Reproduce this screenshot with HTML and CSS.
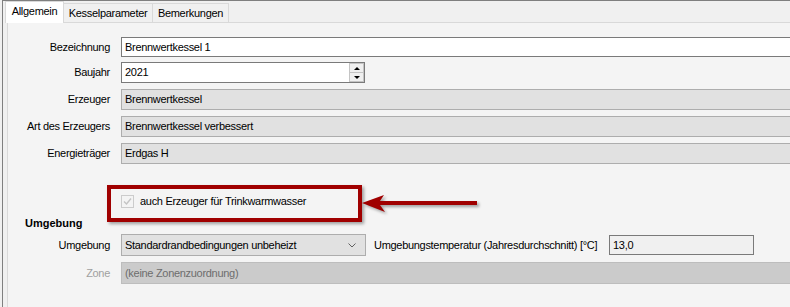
FILE: index.html
```html
<!DOCTYPE html>
<html lang="de">
  <head>
    <meta charset="UTF-8" />
    <meta name="viewport" content="width=device-width, initial-scale=1.0" />
    <title>Erzeuger</title>
    <link rel="stylesheet" href="styles.css">
  </head>
  <body>
    <div class="window">
      <div class="tabs">
        <div class="tab tab-active">Allgemein</div>
        <div class="tab tab-kessel">Kesselparameter</div>
        <div class="tab tab-notes">Bemerkungen</div>
      </div>
      <div class="panel">
        <div class="form">
          <label class="label">Bezeichnung</label>
          <div class="field">Brennwertkessel 1</div>

          <label class="label label-tall">Baujahr</label>
          <div class="field field-spin">
            <span>2021</span>
            <span class="spinner">
              <span class="spin-btn"><i class="tri-up"></i></span>
              <span class="spin-btn"><i class="tri-down"></i></span>
            </span>
          </div>

          <label class="label label-tall">Erzeuger</label>
          <div class="field field-readonly">Brennwertkessel</div>

          <label class="label label-tall">Art des Erzeugers</label>
          <div class="field field-readonly">Brennwertkessel verbessert</div>

          <label class="label label-tall">Energieträger</label>
          <div class="field field-readonly">Erdgas H</div>
        </div>

        <div class="check-row">
          <span class="checkbox">
            <svg width="11" height="11" viewBox="0 0 11 11">
              <path d="M2 5.5 L4.5 8 L9 2.5" fill="none" stroke="#c4c4c4" stroke-width="1.4" />
            </svg>
          </span>
          <span>auch Erzeuger für Trinkwarmwasser</span>
        </div>

        <div class="section-title">Umgebung</div>

        <div class="form form-env">
          <label class="label label-env">Umgebung</label>
          <div class="env-row">
            <div class="combo">
              <span>Standardrandbedingungen unbeheizt</span>
              <svg width="8" height="5" viewBox="0 0 8 5">
                <path d="M0.5 0.5 L4 4 L7.5 0.5" fill="none" stroke="#606060" stroke-width="1" />
              </svg>
            </div>
            <span class="temp-label">Umgebungstemperatur (Jahresdurchschnitt) [°C]</span>
            <div class="field field-temp">13,0</div>
          </div>

          <label class="label label-env label-disabled">Zone</label>
          <div class="field field-zone">(keine Zonenzuordnung)</div>
        </div>
      </div>
    </div>

    <div class="callout-box"></div>
    <svg class="callout-arrow" width="120" height="24" viewBox="0 0 120 24">
      <path d="M2 11 L24 3 L20 9 L117 9 L117 13 L20 13 L25 20 Z" fill="#a00000" />
    </svg>
  </body>
</html>
```

FILE: styles.css
```css
:root {
  --strip-bg: #f0f0f0;
  --panel-bg: #f4f4f4;
  --tab-border: #d9d9d9;
  --field-border: #7a7a7a;
  --readonly-bg: #e1e1e1;
  --readonly-border: #adadad;
  --callout: #a00000;
}

body {
  margin: 0;
  width: 790px;
  height: 307px;
  overflow: hidden;
  background-color: var(--strip-bg);
  font-family: "Liberation Sans", Arial, sans-serif;
  font-size: 11px;
  letter-spacing: -0.3px;
  color: #000;
}

.window {
  margin-left: 2px;
  height: 307px;
  box-sizing: border-box;
  border-left: 1px solid #7f7f7f;
  border-top: 1px solid #7f7f7f;
  display: flex;
  flex-direction: column;
}

/* tab strip */
.tabs {
  display: flex;
  align-items: flex-end;
  height: 21px;
  padding-left: 2px;
}

.tab {
  box-sizing: border-box;
  height: 19px;
  padding-top: 3px;
  line-height: 13px;
  text-align: center;
  border-top: 1px solid var(--tab-border);
  border-right: 1px solid var(--tab-border);
  background-color: var(--strip-bg);
}

.tab-active {
  position: relative;
  z-index: 1;
  width: 59px;
  height: 22px;
  margin-bottom: -1px;
  border-left: 1px solid var(--tab-border);
  background-color: #fff;
}

.tab-kessel {
  width: 89px;
}

.tab-notes {
  width: 76px;
}

/* tab page */
.panel {
  flex: 1;
  margin-left: 4px;
  border-left: 1px solid var(--tab-border);
  border-top: 1px solid var(--tab-border);
  background-color: var(--panel-bg);
}

.form {
  display: grid;
  grid-template-columns: 102px 700px;
  grid-template-rows: 25px 27px 27px 27px 21px;
  column-gap: 11px;
  align-items: start;
  margin-top: 14px;
}

.label {
  text-align: right;
  line-height: 20px;
  white-space: nowrap;
}

.label-tall {
  line-height: 21px;
}

.label-disabled {
  color: #a0a0a0;
}

.field {
  box-sizing: border-box;
  height: 20px;
  padding: 0 3px;
  line-height: 18px;
  border: 1px solid var(--field-border);
  background-color: #fff;
  white-space: nowrap;
}

.field-spin {
  width: 244px;
  height: 21px;
  line-height: 19px;
  padding-right: 0;
  display: flex;
  justify-content: space-between;
}

.spinner {
  display: flex;
  flex-direction: column;
  width: 15px;
  height: 19px;
  box-sizing: border-box;
  border: 1px solid #c4c4c4;
}

.spin-btn {
  flex: 1;
  display: flex;
  align-items: center;
  justify-content: center;
  background-color: #f0f0f0;
}

.spin-btn + .spin-btn {
  border-top: 1px solid #c4c4c4;
}

.tri-up,
.tri-down {
  width: 0;
  height: 0;
  border-left: 3px solid transparent;
  border-right: 3px solid transparent;
}

.tri-up {
  border-bottom: 3px solid #000;
}

.tri-down {
  border-top: 3px solid #000;
}

.field-readonly {
  height: 21px;
  line-height: 19px;
  border-color: var(--readonly-border);
  background-color: var(--readonly-bg);
}

/* checkbox */
.check-row {
  display: flex;
  align-items: center;
  gap: 6px;
  height: 13px;
  line-height: 13px;
  margin: 31px 0 0 113px;
}

.checkbox {
  box-sizing: border-box;
  width: 13px;
  height: 13px;
  border: 1px solid #cccccc;
  background-color: var(--panel-bg);
  display: flex;
  align-items: center;
  justify-content: center;
}

.section-title {
  margin: 9px 0 0 17px;
  font-weight: bold;
  letter-spacing: 0;
  line-height: 13px;
}

/* environment block */
.form-env {
  grid-template-rows: 28px 22px;
  margin-top: 4px;
}

.label-env {
  line-height: 22px;
}

.env-row {
  display: flex;
  align-items: center;
  height: 22px;
}

.combo {
  box-sizing: border-box;
  width: 245px;
  height: 22px;
  padding: 0 9px 0 3px;
  display: flex;
  align-items: center;
  justify-content: space-between;
  border: 1px solid var(--readonly-border);
  background-color: var(--readonly-bg);
}

.temp-label {
  width: 235px;
  margin-left: 8px;
  white-space: nowrap;
}

.field-temp {
  width: 145px;
  background-color: #f0f0f0;
}

.field-zone {
  height: 22px;
  line-height: 20px;
  color: #6d6d6d;
  border-color: #bdbdbd;
  background-color: #cbcbcb;
}

/* red annotation drawn over the form */
.callout-box {
  position: absolute;
  left: 107px;
  top: 185px;
  width: 255px;
  height: 37px;
  box-sizing: border-box;
  border: 4px solid var(--callout);
  box-shadow: 2px 2px 3px rgba(0, 0, 0, 0.35);
}

.callout-arrow {
  position: absolute;
  left: 360px;
  top: 192px;
  filter: drop-shadow(2px 2px 1.5px rgba(0, 0, 0, 0.35));
}
```
